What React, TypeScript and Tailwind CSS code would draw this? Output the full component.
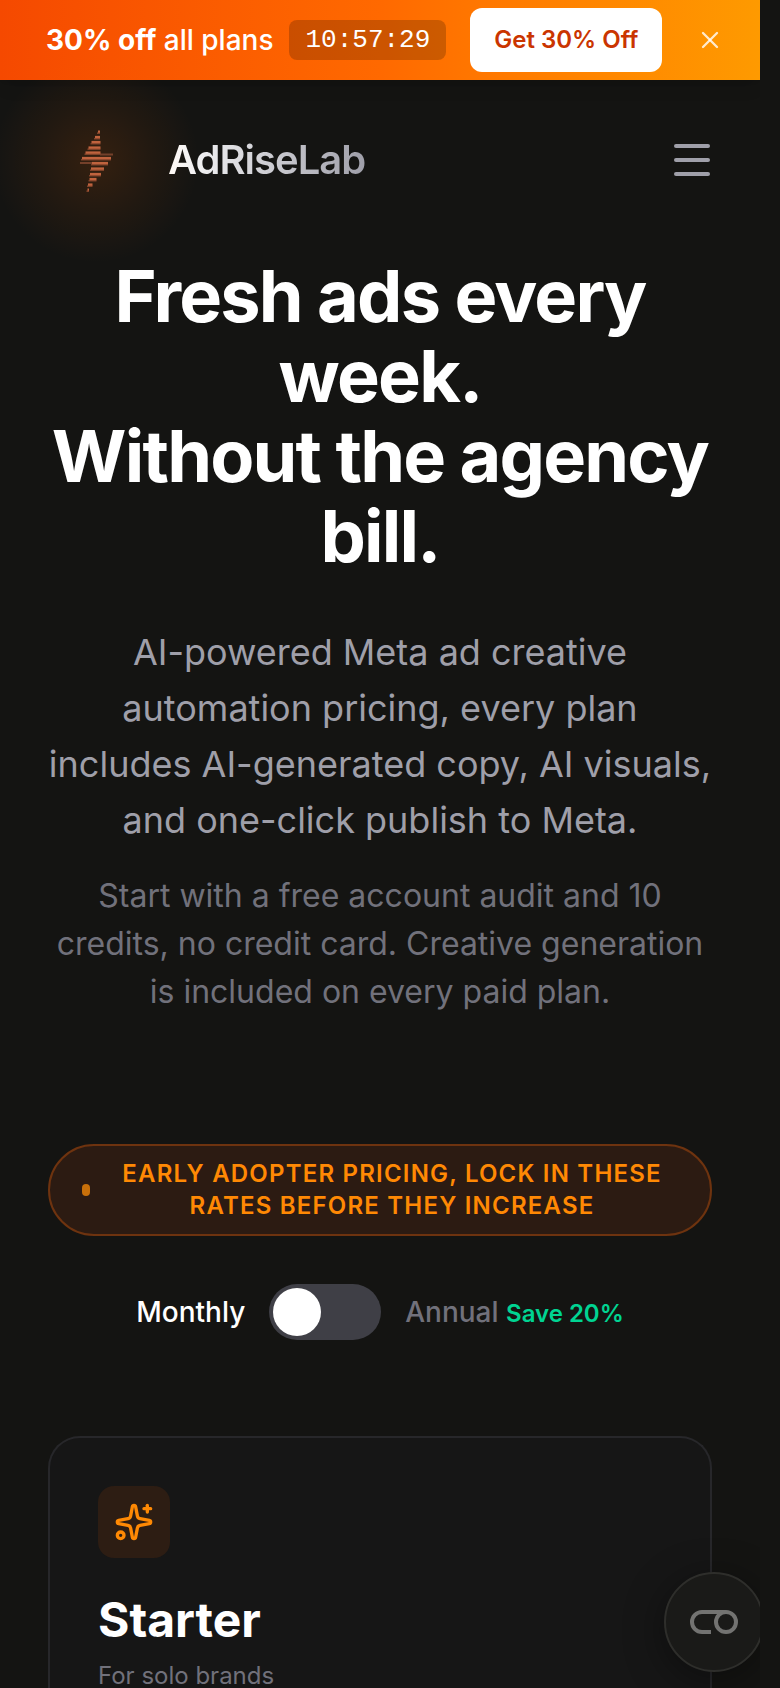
import { useState } from "react";
import { Sparkles, X } from "lucide-react";

// [y, left, right] of each bar in the bolt logo
const boltBars = [
  [4, 20, 22],
  [9.5, 17, 22],
  [14.5, 13.5, 22.5],
  [20, 10.5, 22.5],
  [25, 7.5, 22.5],
  [30.5, 4, 33],
  [35.5, 14, 30],
  [41, 13, 26],
  [46.5, 12, 23],
  [51.5, 11.5, 18.5],
  [57, 10, 14.5],
  [62, 9.5, 11],
];

function Logo() {
  return (
    <svg className="relative h-16 w-9" viewBox="0 0 36 64" aria-hidden="true">
      <path d="M22 26.5H35M2 35H14" stroke="#74402a" strokeWidth="2" />
      {boltBars.map(([y, left, right]) => (
        <g key={y}>
          <path
            d={`M${left - 1} ${y + 1.2}H${right}`}
            stroke="#7d4128"
            strokeWidth="1.6"
          />
          <path
            d={`M${left} ${y - 0.4}H${right}`}
            stroke="#c0633e"
            strokeWidth="2.4"
          />
        </g>
      ))}
    </svg>
  );
}

function Banner() {
  const [open, setOpen] = useState(true);
  if (!open) return null;

  return (
    <div className="relative flex h-20 items-center bg-linear-to-r from-[#f54900] via-[#ff6900] to-[#fe9a00] pr-7 pl-[46px] text-white shadow-lg">
      <p className="text-[28px] leading-10 font-medium whitespace-nowrap">
        <strong className="font-bold">30% off</strong> all plans
      </p>
      <span className="ml-4 rounded-lg bg-black/20 px-4 font-['Liberation_Mono',monospace] text-[26px] leading-10">
        10:57:29
      </span>
      <button className="ml-6 h-16 rounded-xl bg-white px-6 text-2xl font-semibold whitespace-nowrap text-[#ca3500]">
        Get 30% Off
      </button>
      <button
        aria-label="Close"
        className="ml-auto p-2 text-white/80"
        onClick={() => setOpen(false)}
      >
        <X size={28} strokeWidth={2} />
      </button>
    </div>
  );
}

function Header() {
  return (
    <header className="flex h-40 items-center justify-between px-12">
      <a href="#" className="flex items-center gap-6">
        <span className="relative flex size-24 items-center justify-center">
          <span className="absolute -inset-16 rounded-full bg-radial from-[#ff6900]/14 via-[#ff6900]/6 via-35% to-transparent to-65%" />
          <Logo />
        </span>
        <span className="bg-linear-to-r from-white to-[#9f9fa9] bg-clip-text text-[40px] font-semibold tracking-tight text-transparent">
          AdRiseLab
        </span>
      </a>
      <button aria-label="Open menu" className="flex flex-col gap-[10px] p-[2px]">
        <span className="h-1 w-9 rounded-full bg-[#9f9fa9]" />
        <span className="h-1 w-9 rounded-full bg-[#9f9fa9]" />
        <span className="h-1 w-9 rounded-full bg-[#9f9fa9]" />
      </button>
    </header>
  );
}

function BillingToggle() {
  const [annual, setAnnual] = useState(false);

  return (
    <div className="mt-12 flex items-center justify-center gap-6 text-[28px] leading-10 font-medium">
      <label htmlFor="billing" className="text-white">
        Monthly
      </label>
      <input
        id="billing"
        type="checkbox"
        role="switch"
        checked={annual}
        onChange={() => setAnnual(!annual)}
        className="h-14 w-28 appearance-none rounded-full bg-[#3f3f46] p-1 before:block before:size-12 before:rounded-full before:bg-white checked:bg-[#ff6900] checked:before:ml-auto"
      />
      <label htmlFor="billing" className="text-[#71717b]">
        Annual{" "}
        <span className="text-2xl font-semibold text-[#00d492]">Save 20%</span>
      </label>
    </div>
  );
}

function App() {
  return (
    <div className="min-h-screen bg-[#141412] pr-5 font-[Inter,sans-serif]">
      <div className="relative flex min-h-screen flex-col overflow-hidden">
        <Banner />
        <Header />
        <main className="flex flex-1 flex-col px-12 pt-4 text-center">
          <h1 className="text-7xl leading-20 font-bold tracking-tight text-white">
            Fresh ads every week.
            <br />
            Without the agency bill.
          </h1>
          <p className="mt-12 text-4xl leading-14 text-[#9f9fa9]">
            AI-powered Meta ad creative automation pricing, every plan includes
            AI-generated copy, AI visuals, and one-click publish to Meta.
          </p>
          <p className="mt-6 text-[32px] leading-12 text-[#71717b]">
            Start with a free account audit and 10 credits, no credit card.
            Creative generation is included on every paid plan.
          </p>

          <div className="mt-32 flex items-center gap-4 rounded-full border-2 border-[#6e330f] bg-[#2c1b12] px-8 py-3">
            <span className="h-3 w-2 shrink-0 rounded-full bg-[#c8700a]" />
            <p className="flex-1 text-2xl leading-8 font-semibold tracking-wider text-[#ff8904] uppercase">
              Early adopter pricing, lock in these rates before they increase
            </p>
          </div>

          <BillingToggle />

          <section className="mt-24 flex-1 rounded-t-[32px] border-2 border-b-0 border-[#27272a] bg-[#161616] px-12 pt-12 text-left">
            <div className="flex size-18 items-center justify-center rounded-2xl bg-[#2d1d13] text-[#ff8904]">
              <Sparkles size={40} />
            </div>
            <h2 className="mt-8 text-5xl leading-15 font-bold text-white">
              Starter
            </h2>
            <p className="mt-4 text-2xl leading-5 text-[#71717b]">
              For solo brands
            </p>
          </section>
        </main>

        <button
          aria-label="Cookie settings"
          className="absolute -right-1 bottom-4 flex size-25 items-center justify-center rounded-full border-2 border-[#2e2e2b] bg-[#1a1a18] shadow-[0_8px_40px_rgba(0,0,0,0.4)]"
        >
          <svg
            className="h-6 w-12"
            viewBox="0 0 48 24"
            fill="none"
            stroke="#737371"
            strokeWidth="4"
          >
            <path d="M21 22H12A10 10 0 0 1 12 2H36" />
            <circle cx="36" cy="12" r="10" />
          </svg>
        </button>
      </div>
    </div>
  );
}

export default App;
